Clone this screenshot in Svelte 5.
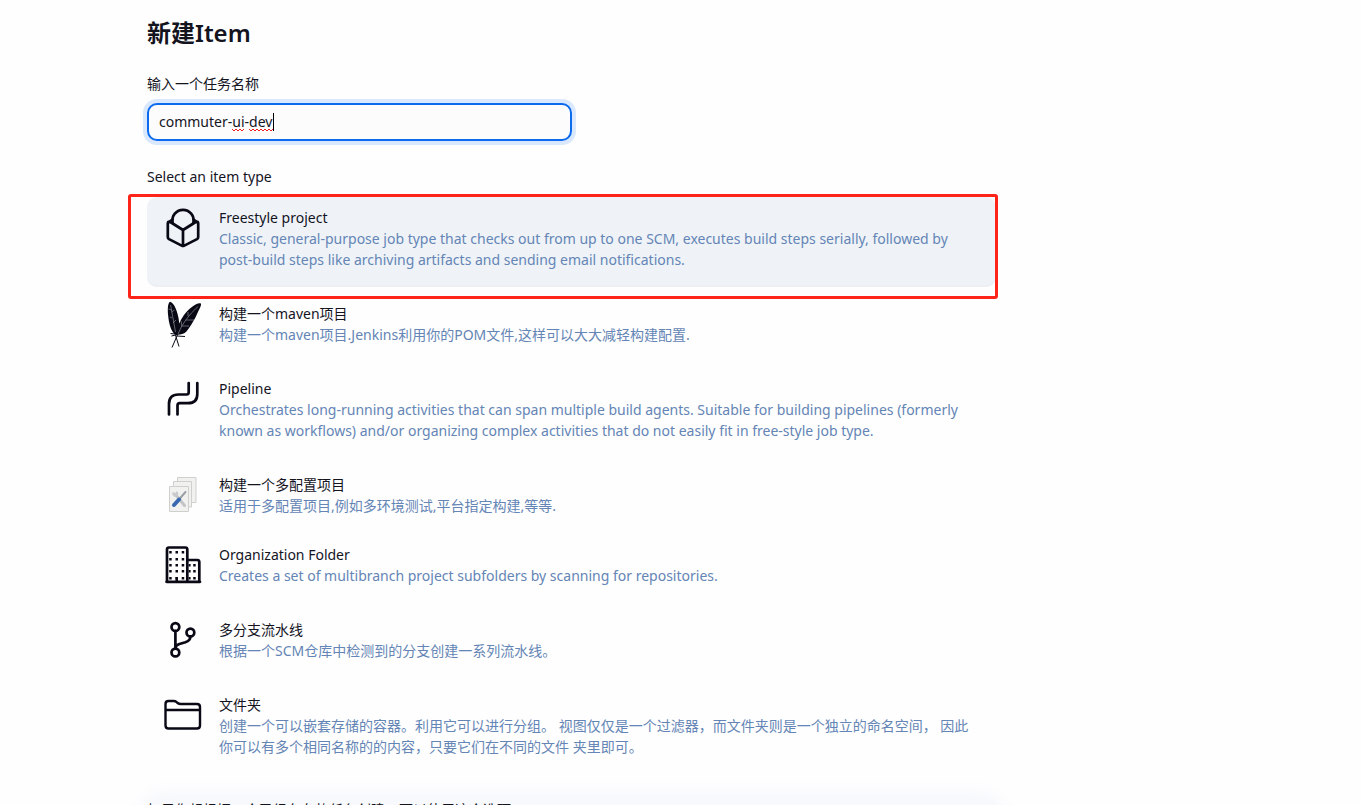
<script lang="ts">
    type Item = {
        id: string;
        name: string;
        desc: string;
        compact?: boolean;
    };

    const items: Item[] = [
        {
            id: "freestyle",
            name: "Freestyle project",
            desc: "Classic, general-purpose job type that checks out from up to one SCM, executes build steps serially, followed by post-build steps like archiving artifacts and sending email notifications.",
        },
        {
            id: "maven",
            name: "构建一个maven项目",
            desc: "构建一个maven项目.Jenkins利用你的POM文件,这样可以大大减轻构建配置.",
        },
        {
            id: "pipeline",
            name: "Pipeline",
            desc: "Orchestrates long-running activities that can span multiple build agents. Suitable for building pipelines (formerly known as workflows) and/or organizing complex activities that do not easily fit in free-style job type.",
        },
        {
            id: "matrix",
            name: "构建一个多配置项目",
            desc: "适用于多配置项目,例如多环境测试,平台指定构建,等等.",
            compact: true,
        },
        {
            id: "organization",
            name: "Organization Folder",
            desc: "Creates a set of multibranch project subfolders by scanning for repositories.",
        },
        {
            id: "multibranch",
            name: "多分支流水线",
            desc: "根据一个SCM仓库中检测到的分支创建一系列流水线。",
        },
        {
            id: "folder",
            name: "文件夹",
            desc: "创建一个可以嵌套存储的容器。利用它可以进行分组。 视图仅仅是一个过滤器，而文件夹则是一个独立的命名空间， 因此你可以有多个相同名称的的内容，只要它们在不同的文件 夹里即可。",
        },
    ];

    let name = $state("commuter-ui-dev");
    let selected = $state("freestyle");

    const floors = [17, 24, 30, 36, 43];
</script>

{#snippet icon(id: string)}
    {#if id === "freestyle"}
        <svg class="icon" viewBox="4 4 48 48" aria-hidden="true">
            <path class="line" d="M17.6 22.5a10.6 10.6 0 1 1 20.8 0" />
            <path
                class="line"
                d="M14.5 21.5 28 30l13.500-8.500q1.700 0 1.700 2V37q0 1.400-1.200 2.100L29.300 45.600q-1.300.7-2.600 0L14 39.100q-1.200-.7-1.200-2.100V23.500q0-2 1.700-2zM28 30v15.500M14.500 21.500l3-2M41.500 21.500l-3-2"
            />
        </svg>
    {:else if id === "maven"}
        <svg class="icon" viewBox="4 5 48 48" aria-hidden="true">
            <path
                class="solid"
                d="M15 6.800C12.600 8 12.500 15 13.200 21c.6 6 2 13 6 18l2.600 1.400c2.400-4 3-10 1.900-16.500C22.500 17 19.500 8 15 6.800zM45.800 8.600c-3.500-1.600-12 5-17 11.600C24.600 26 22.200 32 21.600 39.600c3 .2 7.800-.6 9.800-3.200 3.200-3.600 7.200-10 10.200-16.400 2.500-5 5.400-10.600 4.200-11.400z"
            />
            <path class="quill" d="M19.500 37 24 51.500M23 38.500 17 52.500M15.500 38.500l4 .5M16.500 41l4-1M22 41l8 .5" />
            <path class="vein" d="M15.600 10 20.500 37M43 11.500Q29 24 23 39M13.500 14l3 1M16.500 17l3-2M15 22l2 1M18 28l3-3M33 21v-4M31 25h8M27 32l-1-6M28 31h6" />
        </svg>
    {:else if id === "pipeline"}
        <svg class="icon" viewBox="4 5 48 48" aria-hidden="true">
            <path class="line" d="M14 44.500V34q0-9.500 9.500-9.500h8q2.200 0 2.200-2.200V13M22.500 44.500V35.500q0-2.300 2.300-2.300H33q9.300 0 9.300-9.200V13" />
        </svg>
    {:else if id === "matrix"}
        <svg class="icon" viewBox="4 6 48 48" aria-hidden="true">
            <path class="paper" d="M22.500 12.500h18.500v25H22.500z" />
            <path class="paper" d="M18.500 16.500h18v25.500h-18z" />
            <path class="paper" d="M14.500 21.500h19v25h-19z" />
            <path d="m20.500 29.500 9 11" stroke="#c2c4c6" stroke-width="3" stroke-linecap="round" />
            <path d="M17.500 27v3l2 2 3-1 1-3-2-2-1 2z" fill="#c8cacc" />
            <path d="m23.500 35 7-8" stroke="#9aa0a6" stroke-width="2" stroke-linecap="round" />
            <path d="m19 40 5-5.500" stroke="#3869b1" stroke-width="4" stroke-linecap="round" />
        </svg>
    {:else if id === "organization"}
        <svg class="icon" viewBox="4 6 48 48" aria-hidden="true">
            <path class="line" d="M12 47V14.500q0-2 2-2h16.300q2 0 2 2V47M32.300 25h10q2 0 2 2v20M11.500 46.800h33.500" />
            {#each floors as y}
                <path class="solid" d="M14.200 {y - 1}h2.500v2.400h-2.500zM20.500 {y - 1}H23v2.400h-2.500zM26.700 {y - 1}h2.500v2.400h-2.500z" />
                {#if y > 25}
                    <path class="solid" d="M33.600 {y - 1}h2v2.400h-2zM38.200 {y - 1}h2.500v2.400h-2.500z" />
                {/if}
            {/each}
            <path class="solid" d="M20.500 42H23v4h-2.500z" />
        </svg>
    {:else if id === "multibranch"}
        <svg class="icon" viewBox="4 6 48 48" aria-hidden="true">
            <circle class="line" cx="20.400" cy="17" r="3.900" />
            <circle class="line" cx="35.400" cy="22.500" r="3.900" />
            <circle class="line" cx="20.400" cy="42.500" r="3.900" />
            <path class="line" d="M20.400 21v17.500c0-2.200 1.600-3.700 4-4.500l6-1.800c3-1 5-2.700 5-5.700" />
        </svg>
    {:else}
        <svg class="icon" viewBox="4 6 48 48" aria-hidden="true">
            <path class="line thin" d="M10.500 25v-6q0-3 3-3h5.200q1.600 0 3 1.200l1 .8q1.200 1 3 1h16.300q3 0 3 3V40.500q0 3-3 3H13.500q-3 0-3-3zM10.500 25H45" />
        </svg>
    {/if}
{/snippet}

<main>
    <form onsubmit={(e) => e.preventDefault()}>
        <h1>新建Item</h1>

        <label class="caption" for="name">输入一个任务名称</label>
        <div class="field">
            <input id="name" type="text" autocomplete="off" spellcheck="false" bind:value={name} />
            {#if name === "commuter-ui-dev"}
                <!-- spelling marks and caret -->
                <svg class="marks" viewBox="0 0 130 22" aria-hidden="true">
                    <path d="M85 17l2 2 2-2 2 2 2-2 2 2 2-2M102 17l2 2 2-2 2 2 2-2 2 2 2-2 2 2 2-2 2 2 2-2 2 2 2-2" />
                    <path class="caret" d="M126.500 1v18" />
                </svg>
            {/if}
        </div>

        <fieldset>
            <legend class="caption">Select an item type</legend>
            <div class="items">
                {#each items as item}
                    <label class="item" class:compact={item.compact} class:active={selected === item.id}>
                        <input type="radio" name="mode" value={item.id} bind:group={selected} />
                        {@render icon(item.id)}
                        <span class="text">
                            <span class="name">{item.name}</span>
                            <span class="desc">{item.desc}</span>
                        </span>
                    </label>
                {/each}
            </div>
        </fieldset>

        <footer>如果你想根据一个已经存在的任务创建，可以使用这个选项</footer>
    </form>
</main>

<style>
    :global(body) {
        margin: 0;
        background: #fefefe;
    }

    main {
        box-sizing: border-box;
        height: 100vh;
        overflow-y: auto;
        scrollbar-width: none;
        padding: 16px 24px 0 147px;
        font-family: "Noto Sans", "Noto Sans CJK SC", sans-serif;
        font-size: 14px;
        line-height: 21px;
        color: #14141f;
    }

    form {
        max-width: 849px;
    }

    h1 {
        margin: 0 0 23px;
        font-size: 24px;
        line-height: 34px;
        font-weight: 600;
    }

    .caption {
        display: block;
        padding: 0;
    }

    .field {
        position: relative;
        max-width: 425px;
        margin: 9px 0 25px;
    }

    .field input {
        display: block;
        box-sizing: border-box;
        width: 100%;
        height: 38px;
        padding: 0 10px 2px;
        border: 2px solid #0b6aee;
        border-radius: 10px;
        outline: none;
        background: #fcfcfc;
        box-shadow: 0 0 0 4px #d9e8fc;
        font: inherit;
        color: inherit;
    }

    .marks {
        position: absolute;
        top: 9px;
        left: 0;
        width: 130px;
        height: 22px;
        fill: none;
        stroke: #f02020;
        stroke-width: 1;
        pointer-events: none;
    }

    .marks .caret {
        stroke: #000;
    }

    fieldset {
        min-width: 0;
        margin: 0;
        padding: 0;
        border: 0;
    }

    .items {
        display: flex;
        flex-direction: column;
        gap: 6px;
        margin-top: 10px;
    }

    .item {
        position: relative;
        display: flex;
        align-items: flex-start;
        gap: 12px;
        padding: 10px 16px 17px 12px;
        border-radius: 10px;
        cursor: pointer;
    }

    .item.compact {
        padding-bottom: 12px;
    }

    .item.active {
        background: #eff3f8;
        box-shadow: inset 0 -2px #ecf0f5;
    }

    /* red frame round the chosen type */
    .item.active::after {
        content: "";
        position: absolute;
        inset: -3px -2px -12px -19px;
        border: 3px solid #ff2419;
        border-radius: 3px;
        pointer-events: none;
    }

    .item input {
        position: absolute;
        margin: 0;
        opacity: 0;
    }

    /* negative margins keep the row height set by the text */
    .icon {
        flex: none;
        width: 48px;
        height: 48px;
        margin: -3px 0 -6px;
        fill: none;
    }

    .line {
        fill: none;
        stroke: #090916;
        stroke-width: 2.7;
        stroke-linecap: round;
        stroke-linejoin: round;
    }

    .thin {
        stroke-width: 2.4;
    }

    .solid {
        fill: #090916;
    }

    .quill {
        stroke: #090916;
        stroke-width: 1;
    }

    .vein {
        stroke: #a0a0a8;
        stroke-width: 0.6;
    }

    .paper {
        fill: #f1f1f0;
        stroke: #cfcfcd;
        stroke-width: 1;
    }

    .text {
        flex: 1;
        min-width: 0;
    }

    .name,
    .desc {
        display: block;
    }

    .desc {
        color: #6485b5;
    }

    footer {
        margin-top: 25px;
        padding-bottom: 24px;
        background: #f8f9fc;
        box-shadow: 0 0 24px #f0f3fa;
    }
</style>
